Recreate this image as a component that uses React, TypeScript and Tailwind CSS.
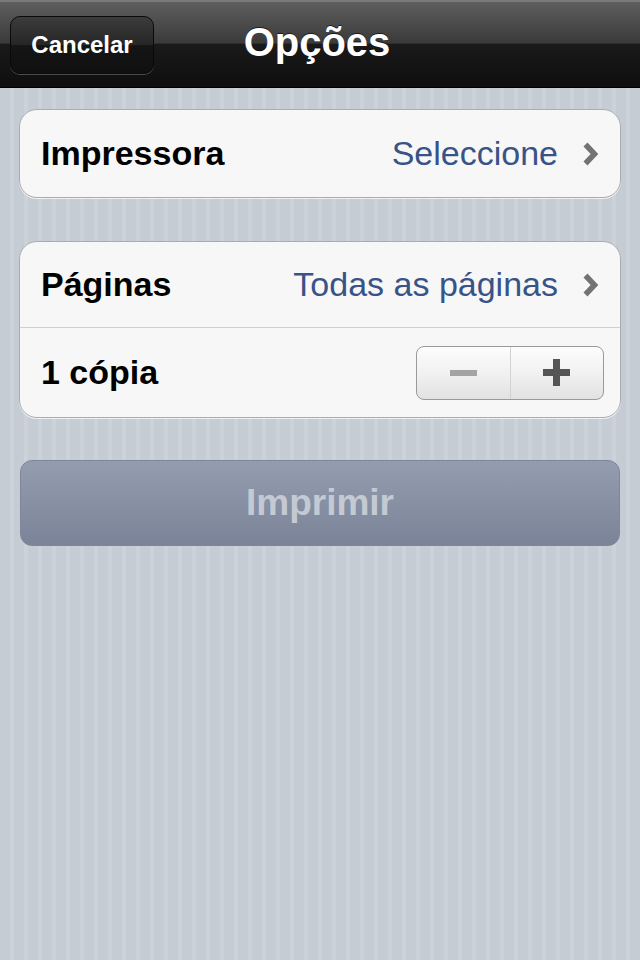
export default function App() {
  const stripes =
    "bg-[repeating-linear-gradient(90deg,#c5ccd4_0px,#c5ccd4_10px,#cbd2d9_10px,#cbd2d9_14px)]"

  const Chevron = () => (
    <svg width="18" height="26" viewBox="0 0 18 26" className="shrink-0">
      <polyline points="3.5,3.5 12.5,13 3.5,22.5" fill="none" stroke="#737373" strokeWidth="5.5" strokeLinejoin="miter" />
    </svg>
  )

  return (
    <div className={`w-[640px] h-[960px] font-['Liberation_Sans',Arial,sans-serif] ${stripes}`}>
      {/* nav bar */}
      <header className="h-[88px] flex items-center px-[10px] border-t-2 border-t-[#7a7a7a] border-b border-b-black bg-[linear-gradient(180deg,#5e5e5e_0%,#3a3a3a_48%,#1a1a1a_50%,#0e0e0e_100%)]">
        <button className="w-[144px] h-[58px] rounded-[10px] border border-[#0a0a0a] shadow-[0_1px_0_rgba(255,255,255,0.25)] bg-[linear-gradient(180deg,#3c3c3c_0%,#262626_50%,#151515_51%,#101010_100%)] text-white font-bold text-[24px]">
          Cancelar
        </button>
        <h1 className="flex-1 text-center text-white font-bold text-[40px] pr-[6px] -mt-[6px] [text-shadow:0_-1px_0_rgba(0,0,0,0.6)]">
          Opções
        </h1>
        <div className="w-[144px]" />
      </header>

      <main className="px-[19px] pt-[21px]">
        <section className="rounded-[18px] border border-[#a9abae] bg-[#f7f7f7] shadow-[0_1px_0_rgba(255,255,255,0.7)]">
          <div className="h-[87px] flex items-center pl-[21px] pr-[20px]">
            <span className="font-bold text-[34px] text-black">Impressora</span>
            <span className="ml-auto text-[34px] text-[#385487] mr-[24px]">Seleccione</span>
            <Chevron />
          </div>
        </section>

        <section className="mt-[43px] rounded-[18px] border border-[#a9abae] bg-[#f7f7f7] shadow-[0_1px_0_rgba(255,255,255,0.7)]">
          <div className="h-[86px] flex items-center pl-[21px] pr-[20px] border-b border-[#cfd0d2]">
            <span className="font-bold text-[34px] text-black">Páginas</span>
            <span className="ml-auto text-[34px] text-[#385487] mr-[24px]">Todas as páginas</span>
            <Chevron />
          </div>
          <div className="h-[89px] flex items-center pl-[21px] pr-[16px]">
            <span className="font-bold text-[34px] text-black">1 cópia</span>
            <div className="ml-auto w-[188px] h-[54px] flex rounded-[8px] border border-[#9a9a9a] bg-[linear-gradient(180deg,#fdfdfd_0%,#f1f1f1_50%,#e2e2e2_100%)]">
              <div className="flex-1 flex items-center justify-center border-r border-[#d2d2d2]">
                <div className="w-[27px] h-[6px] bg-[#a3a3a3]" />
              </div>
              <div className="flex-1 flex items-center justify-center">
                <div className="relative w-[27px] h-[27px]">
                  <div className="absolute left-0 top-[10px] w-[27px] h-[7px] bg-[#555]" />
                  <div className="absolute top-0 left-[10px] w-[7px] h-[27px] bg-[#555]" />
                </div>
              </div>
            </div>
          </div>
        </section>

        <button className="mt-[42px] ml-px w-[600px] h-[86px] rounded-[12px] border border-[#7e8698] bg-[linear-gradient(180deg,#949cb0_0%,#8890a4_50%,#7a8397_100%)] text-[#c4cad4] font-bold text-[37px]">
          Imprimir
        </button>
      </main>
    </div>
  )
}
